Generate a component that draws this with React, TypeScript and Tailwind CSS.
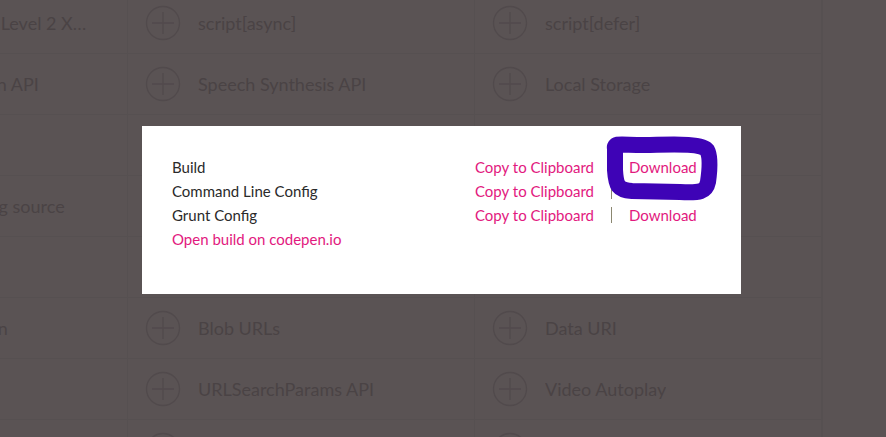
const rows: string[][] = [
  ["XMLHttpRequests Level 2 XHR2", "script[async]", "script[defer]"],
  ["Speech Recognition API", "Speech Synthesis API", "Local Storage"],
  ["Cookies", "Session Storage", "Web SQL Database"],
  ["JavaScript debuging source", "Template Strings", "Typed Arrays"],
  ["Geolocation", "Web Workers", "Shared Workers"],
  ["Popups Notification", "Blob URLs", "Data URI"],
  ["Unicode", "URLSearchParams API", "Video Autoplay"],
  ["Video Loop", "Video Preload", "WebGL"],
];

const links = ["Build", "Command Line Config", "Grunt Config"];

function PlusCircle() {
  return (
    <svg width="36" height="36" viewBox="0 0 36 36" className="shrink-0">
      <circle cx="18" cy="18" r="16.5" fill="none" stroke="#514a4c" strokeWidth="1.3" />
      <path d="M18 7v22M7 18h22" stroke="#514a4c" strokeWidth="1.3" />
    </svg>
  );
}

export default function App() {
  return (
    <div
      className="relative w-[886px] h-[437px] overflow-hidden bg-[#5a5354]"
      style={{ fontFamily: '"Source Sans Pro", Lato, "Noto Sans", sans-serif' }}
    >
      {/* page behind the dialog */}
      <div className="-ml-[219px] -mt-[7px] flex">
        <div className="grid grid-cols-[347px_347px_347px] border-r border-[#565051]">
          {rows.map((r, i) =>
            r.map((name, j) => (
              <div
                key={i + "-" + j}
                className="h-[61px] flex items-center gap-[17px] pl-[17px] pr-[30px] border-b border-r border-[#565051] text-[18px] text-[#4a4345]"
              >
                <PlusCircle />
                <span className="truncate">{name}</span>
              </div>
            ))
          )}
        </div>
      </div>

      {/* dialog */}
      <div className="absolute left-[142px] top-[126px] w-[599px] h-[168px] bg-white pl-[30px] pt-[29px] flex text-[15px] leading-[24px]">
        <div className="w-[303px] flex flex-col text-[#2a2a2a]">
          {links.map((l) => (
            <span key={l}>{l}</span>
          ))}
          <a className="text-[#e2197e]">Open build on codepen.io</a>
        </div>
        <div className="flex flex-col text-[#e2197e]">
          {links.map((l) => (
            <div key={l} className="flex items-center">
              <a className="w-[136px]">Copy to Clipboard</a>
              <span className="w-[18px] flex">
                <span className="w-px h-[16px] bg-[#8b8770]" />
              </span>
              <a>Download</a>
            </div>
          ))}
        </div>
      </div>

      {/* hand drawn annotation */}
      <svg className="absolute inset-0 pointer-events-none" width="886" height="437">
        <path
          d="M615 149 C613 141 626 146 650 145 C680 144 703 144 707 150 C711 157 709 175 708 182 C706 192 700 193 680 192 L632 191 C618 190 616 186 615 170 Z"
          fill="none"
          stroke="#3e03b6"
          strokeWidth="16"
          strokeLinejoin="round"
        />
      </svg>
    </div>
  );
}
